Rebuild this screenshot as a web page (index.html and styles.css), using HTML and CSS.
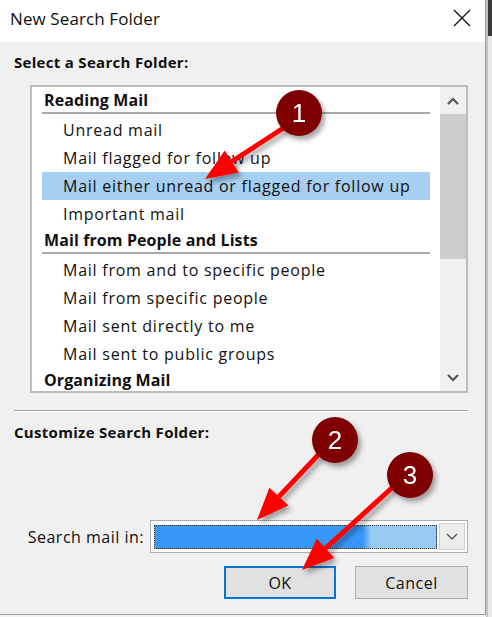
FILE: index.html
```html
<!DOCTYPE html>
<html lang="en">
<head>
    <meta charset="UTF-8">
    <meta name="viewport" content="width=device-width, initial-scale=1.0">
    <title>New Search Folder</title>
    <link rel="stylesheet" href="styles.css">
</head>
<body>

    <div class="screen">
        <div class="dialog">
            <div class="titlebar">
                <span class="title">New Search Folder</span>
                <svg class="close" width="18" height="18" viewBox="0 0 18 18">
                    <path d="M1 1 L17 17 M17 1 L1 17" stroke="#111" stroke-width="1.3" fill="none"/>
                </svg>
            </div>

            <div class="content">
                <div class="section-label">Select a Search Folder:</div>

                <div class="listbox">
                    <ul class="list">
                        <li class="group">Reading Mail</li>
                        <li class="item">Unread mail</li>
                        <li class="item">Mail flagged for follow up</li>
                        <li class="item selected">Mail either unread or flagged for follow up</li>
                        <li class="item">Important mail</li>
                        <li class="group">Mail from People and Lists</li>
                        <li class="item">Mail from and to specific people</li>
                        <li class="item">Mail from specific people</li>
                        <li class="item">Mail sent directly to me</li>
                        <li class="item">Mail sent to public groups</li>
                        <li class="group">Organizing Mail</li>
                    </ul>
                    <div class="scrollbar">
                        <div class="scroll-btn">
                            <svg width="12" height="8" viewBox="0 0 12 8"><path d="M1 7 L6 2 L11 7" stroke="#555" stroke-width="2.2" fill="none"/></svg>
                        </div>
                        <div class="thumb"></div>
                        <div class="track"></div>
                        <div class="scroll-btn">
                            <svg width="12" height="8" viewBox="0 0 12 8"><path d="M1 1 L6 6 L11 1" stroke="#555" stroke-width="2.2" fill="none"/></svg>
                        </div>
                    </div>
                </div>

                <div class="separator"></div>

                <div class="section-label">Customize Search Folder:</div>

                <div class="search-row">
                    <label for="searchIn">Search mail in:</label>
                    <div class="combo" id="searchIn">
                        <div class="combo-value"></div>
                        <div class="combo-btn">
                            <svg width="12" height="7" viewBox="0 0 12 7"><path d="M1 1 L6 6 L11 1" stroke="#444" stroke-width="1.2" fill="none"/></svg>
                        </div>
                    </div>
                </div>

                <div class="buttons">
                    <button class="btn default">OK</button>
                    <button class="btn">Cancel</button>
                </div>
            </div>

            <!-- numbered callouts drawn over the dialog -->
            <svg class="callouts" width="486" height="617" viewBox="0 0 486 617">
                <defs>
                    <filter id="shadow" x="-30%" y="-30%" width="160%" height="160%">
                        <feDropShadow dx="3" dy="4" stdDeviation="2.5" flood-color="#000" flood-opacity="0.35"/>
                    </filter>
                </defs>
                <g class="arrow" filter="url(#shadow)">
                    <line x1="285" y1="127" x2="231.8" y2="161.5"/>
                    <polygon points="205,179 238.9,172.4 224.7,150.6"/>
                </g>
                <g class="arrow" filter="url(#shadow)">
                    <line x1="320" y1="453" x2="278.9" y2="496.6"/>
                    <polygon points="257,520 288.4,505.5 269.4,487.7"/>
                </g>
                <g class="arrow" filter="url(#shadow)">
                    <line x1="394" y1="486" x2="325.5" y2="548.3"/>
                    <polygon points="302,570 334.3,557.9 316.7,538.7"/>
                </g>
                <g class="badge" filter="url(#shadow)">
                    <circle cx="299" cy="113" r="23"/>
                    <text x="299" y="122">1</text>
                </g>
                <g class="badge" filter="url(#shadow)">
                    <circle cx="335" cy="440" r="23"/>
                    <text x="335" y="449">2</text>
                </g>
                <g class="badge" filter="url(#shadow)">
                    <circle cx="410" cy="475" r="23"/>
                    <text x="410" y="484">3</text>
                </g>
            </svg>
        </div>

        <div class="backdrop">
            <div class="backdrop-top"></div>
        </div>
    </div>

</body>
</html>
```

FILE: styles.css
```css
body {
    margin: 0;
    padding: 0;
    background-color: #f4f4f4;
    font-family: "Open Sans", "Noto Sans", sans-serif;
    color: #111;
}
.screen {
    display: flex;
    width: 492px;
    height: 617px;
    overflow: hidden;
}
.dialog {
    position: relative;
    width: 485px;
    height: 614px;
    flex-shrink: 0;
    background-color: #f0f0f0;
    border-right: 1px solid #9a9a9a;
    border-bottom: 1px solid #9a9a9a;
}
.titlebar {
    height: 42px;
    background-color: #fff;
    display: flex;
    align-items: center;
    justify-content: space-between;
    padding: 0 14px 0 10px;
}
.title {
    font-size: 17px;
    letter-spacing: 0.1px;
    margin-top: -5px;
}
.close {
    margin-top: -6px;
}
.content {
    padding: 0 17px 0 14px;
}
.section-label {
    font-weight: bold;
    font-size: 15px;
    letter-spacing: 0.3px;
    line-height: 20px;
    margin-top: 10px;
}
.listbox {
    display: flex;
    margin: 13px 0 0 16px;
    width: 438px;
    height: 308px;
    box-sizing: border-box;
    border: 2px solid #bdbdbd;
    background-color: #fff;
    overflow: hidden;
}
.list {
    list-style: none;
    margin: 0;
    padding: 1px 10px 0 10px;
    flex: 1;
    font-size: 16px;
    letter-spacing: 0.75px;
    white-space: nowrap;
}
.list .group {
    height: 24px;
    line-height: 24px;
    padding-left: 2px;
    font-weight: bold;
    letter-spacing: 0.1px;
    border-bottom: 2px solid #a8a8a8;
    margin-bottom: 2px;
}
.list .item {
    height: 28px;
    line-height: 28px;
    padding-left: 21px;
}
.list .selected {
    background-color: #a6cff1;
}
.scrollbar {
    width: 26px;
    display: flex;
    flex-direction: column;
    background-color: #f0f0f0;
}
.scroll-btn {
    height: 27px;
    display: flex;
    align-items: center;
    justify-content: center;
}
.thumb {
    height: 145px;
    background-color: #cdcdcd;
}
.track {
    flex: 1;
}
.separator {
    margin-top: 17px;
    border-top: 1px solid #a0a0a0;
    border-bottom: 1px solid #fff;
}
.search-row {
    display: flex;
    justify-content: flex-end;
    align-items: center;
    gap: 6px;
    margin-top: 78px;
    font-size: 16px;
    letter-spacing: 0.5px;
}
.combo {
    width: 318px;
    height: 33px;
    box-sizing: border-box;
    border: 1px solid #adadad;
    background-color: #fff;
    display: flex;
    align-items: center;
    padding: 0 2px 0 3px;
    gap: 2px;
}
.combo-value {
    flex: 1;
    height: 24px;
    box-sizing: border-box;
    border: 1px dotted #333;
    background: linear-gradient(to right, #3797f9 0, #3797f9 74%, #9acbf0 77%, #9acbf0 100%);
}
.combo-btn {
    width: 26px;
    height: 27px;
    box-sizing: border-box;
    border: 1px solid #cfcfcf;
    background-color: #ececec;
    display: flex;
    align-items: center;
    justify-content: center;
}
.buttons {
    display: flex;
    justify-content: flex-end;
    gap: 19px;
    margin-top: 13px;
}
.btn {
    width: 113px;
    height: 33px;
    font-family: "Open Sans", "Noto Sans", sans-serif;
    font-size: 16px;
    letter-spacing: 0.5px;
    color: #111;
    background-color: #e1e1e1;
    border: 1px solid #adadad;
    padding: 0;
}
.btn.default {
    width: 112px;
    border: 2px solid #0078d7;
}
.callouts {
    position: absolute;
    top: 0;
    left: 0;
    pointer-events: none;
}
.arrow line {
    stroke: #f00;
    stroke-width: 5;
}
.arrow polygon {
    fill: #f00;
}
.badge circle {
    fill: #7e0000;
}
.badge text {
    fill: #fff;
    font-family: "Liberation Sans", Arial, sans-serif;
    font-size: 26px;
    text-anchor: middle;
}
.backdrop {
    flex: 1;
    background-color: #e9e9e9;
    border-left: 2px solid #c4c4c4;
}
.backdrop-top {
    height: 36px;
    background-color: #3a3a3a;
}
```
